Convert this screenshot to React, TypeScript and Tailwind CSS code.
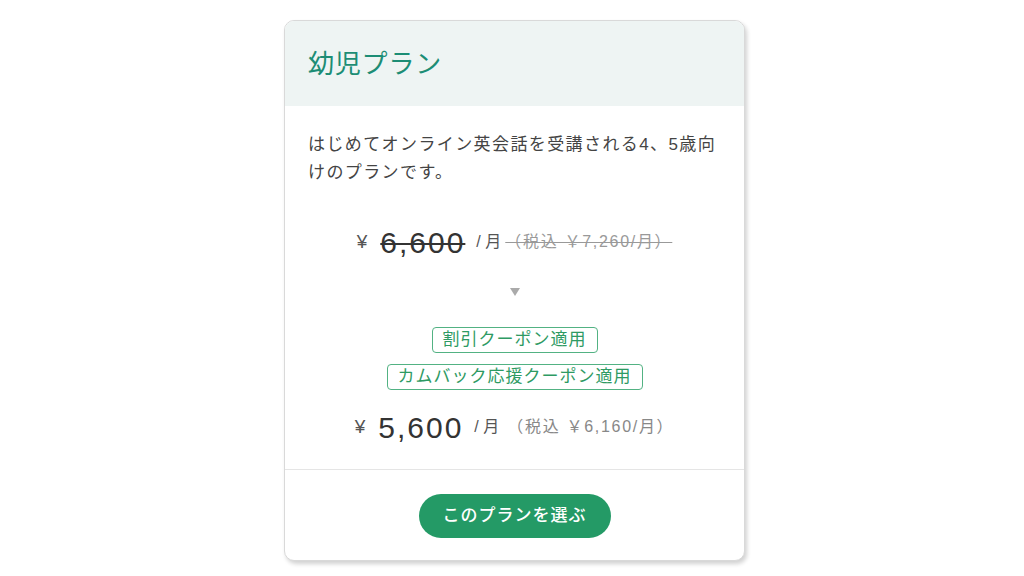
export default function App() {
  const font = { fontFamily: '"Liberation Sans", "Noto Sans CJK JP", sans-serif' };
  return (
    <div className="w-[1024px] h-[576px] bg-white" style={font}>
      <div className="pt-[20px] pl-[284px]">
        <div className="w-[461px] rounded-[10px] border border-[#d9d9d9] bg-white overflow-hidden shadow-[2px_3px_4px_rgba(0,0,0,0.18)]">
          <div className="h-[85px] bg-[#eef4f3] flex items-center pl-[23px]">
            <h2 className="text-[26px] leading-none text-[#1c8d75] tracking-[0.8px]">幼児プラン</h2>
          </div>
          <div className="px-[23px] pt-[25px] pb-[22px]">
            <p className="text-[17px] leading-[28px] text-[#444] tracking-[1.4px]">
              はじめてオンライン英会話を受講される4、5歳向けのプランです。
            </p>
            <div className="mt-[35px] h-[40px] flex items-center justify-center text-[#555]">
              <span className="text-[19px] mr-[13px]">¥</span>
              <span className="text-[30px] tracking-[2px] text-[#333] line-through decoration-[2px] mr-[11px]">6,600</span>
              <span className="text-[16px] mr-[4px]">/ 月</span>
              <span className="text-[16px] text-[#999] line-through tracking-[1.7px]">（税込 ￥7,260/月）</span>
            </div>
            <div className="mt-[24px] flex justify-center">
              <svg width="12" height="12" viewBox="0 0 12 12">
                <polygon points="1,2 11,2 6,10" fill="#aaaaaa" />
              </svg>
            </div>
            <div className="mt-[29px] flex flex-col items-center gap-[11px]">
              <span className="border border-[#52b283] rounded-[4px] px-[10px] py-[1px] text-[17px] leading-[22px] text-[#2e9a63] tracking-[1px]">割引クーポン適用</span>
              <span className="border border-[#52b283] rounded-[4px] px-[10px] py-[1px] text-[17px] leading-[22px] text-[#2e9a63] tracking-[1px]">カムバック応援クーポン適用</span>
            </div>
            <div className="mt-[17px] h-[40px] flex items-center justify-center text-[#555]">
              <span className="text-[19px] mr-[13px]">¥</span>
              <span className="text-[30px] tracking-[2px] text-[#333] mr-[11px]">5,600</span>
              <span className="text-[16px] mr-[8px]">/ 月</span>
              <span className="text-[16px] text-[#888] tracking-[1.7px]">（税込 ￥6,160/月）</span>
            </div>
          </div>
          <div className="border-t border-[#e5e5e5] pt-[24px] pb-[22px] flex justify-center">
            <button className="w-[192px] h-[44px] rounded-full bg-[#249a66] text-white text-[17px] font-medium tracking-[1px]">
              このプランを選ぶ
            </button>
          </div>
        </div>
      </div>
    </div>
  );
}
